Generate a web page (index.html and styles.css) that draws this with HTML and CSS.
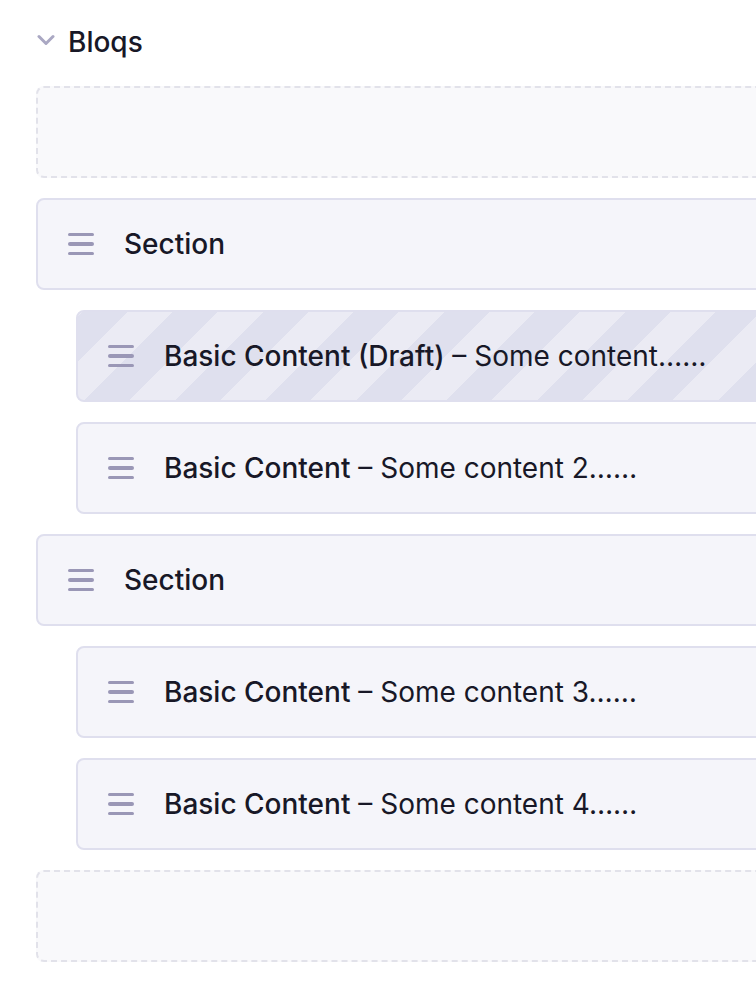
FILE: index.html
```html
<!DOCTYPE html>
<html lang="en">
<head>
  <meta charset="UTF-8" />
  <title>Bloqs</title>
  <link rel="stylesheet" href="styles.css">
</head>
<body>
  <div class="bloqs">
    <div class="bloqs-head">
      <svg class="chevron" width="18" height="12" viewBox="0 0 18 12">
        <path d="M2 2.5 L9 9.5 L16 2.5" fill="none" stroke="#aaa8c3" stroke-width="3" stroke-linecap="round" stroke-linejoin="round"/>
      </svg>
      <span class="bloqs-title">Bloqs</span>
    </div>

    <div class="list">
      <div class="drop"></div>

      <div class="bloq">
        <span class="handle"><i></i><i></i><i></i></span>
        <span class="label"><b>Section</b></span>
      </div>

      <div class="bloq child draft">
        <span class="handle"><i></i><i></i><i></i></span>
        <span class="label"><b>Basic Content (Draft)</b> – Some content……</span>
      </div>

      <div class="bloq child">
        <span class="handle"><i></i><i></i><i></i></span>
        <span class="label"><b>Basic Content</b> – Some content 2……</span>
      </div>

      <div class="bloq">
        <span class="handle"><i></i><i></i><i></i></span>
        <span class="label"><b>Section</b></span>
      </div>

      <div class="bloq child">
        <span class="handle"><i></i><i></i><i></i></span>
        <span class="label"><b>Basic Content</b> – Some content 3……</span>
      </div>

      <div class="bloq child">
        <span class="handle"><i></i><i></i><i></i></span>
        <span class="label"><b>Basic Content</b> – Some content 4……</span>
      </div>

      <div class="drop"></div>
    </div>
  </div>
</body>
</html>
```

FILE: styles.css
```css
html, body {
  margin: 0;
  background: #fff;
  overflow: hidden;
}
body {
  font-family: Inter, Roboto, "Liberation Sans", sans-serif;
  color: #181827;
}
.bloqs {
  padding: 26px 0 0 36px;
  width: 820px;
}
.bloqs-head {
  display: flex;
  align-items: center;
  height: 32px;
}
.chevron {
  margin-left: 1px;
  margin-right: 13px;
  margin-top: -4px;
}
.bloqs-title {
  font-size: 28px;
  font-weight: 500;
}
.list {
  display: flex;
  flex-direction: column;
  gap: 20px;
  margin-top: 28px;
}
.drop {
  height: 92px;
  box-sizing: border-box;
  border: 2px dashed #e2e2ea;
  border-radius: 8px;
  background: #f9f9fb;
}
.bloq {
  height: 92px;
  box-sizing: border-box;
  border: 2px solid #dfdfee;
  border-radius: 8px;
  background: #f5f5fa;
  display: flex;
  align-items: center;
  padding-left: 30px;
}
.bloq.child {
  margin-left: 40px;
}
.bloq.draft {
  background: repeating-linear-gradient(-45deg, #dfe0ee 0 32px, #ebebf4 32px 64px);
}
.handle {
  display: flex;
  flex-direction: column;
  gap: 6px;
  width: 26px;
  margin-right: 30px;
}
.handle i {
  display: block;
  height: 3.5px;
  border-radius: 2px;
  background: #9a97b6;
}
.label {
  font-size: 28px;
  font-weight: 400;
  white-space: nowrap;
}
.label b {
  font-weight: 500;
}
```
